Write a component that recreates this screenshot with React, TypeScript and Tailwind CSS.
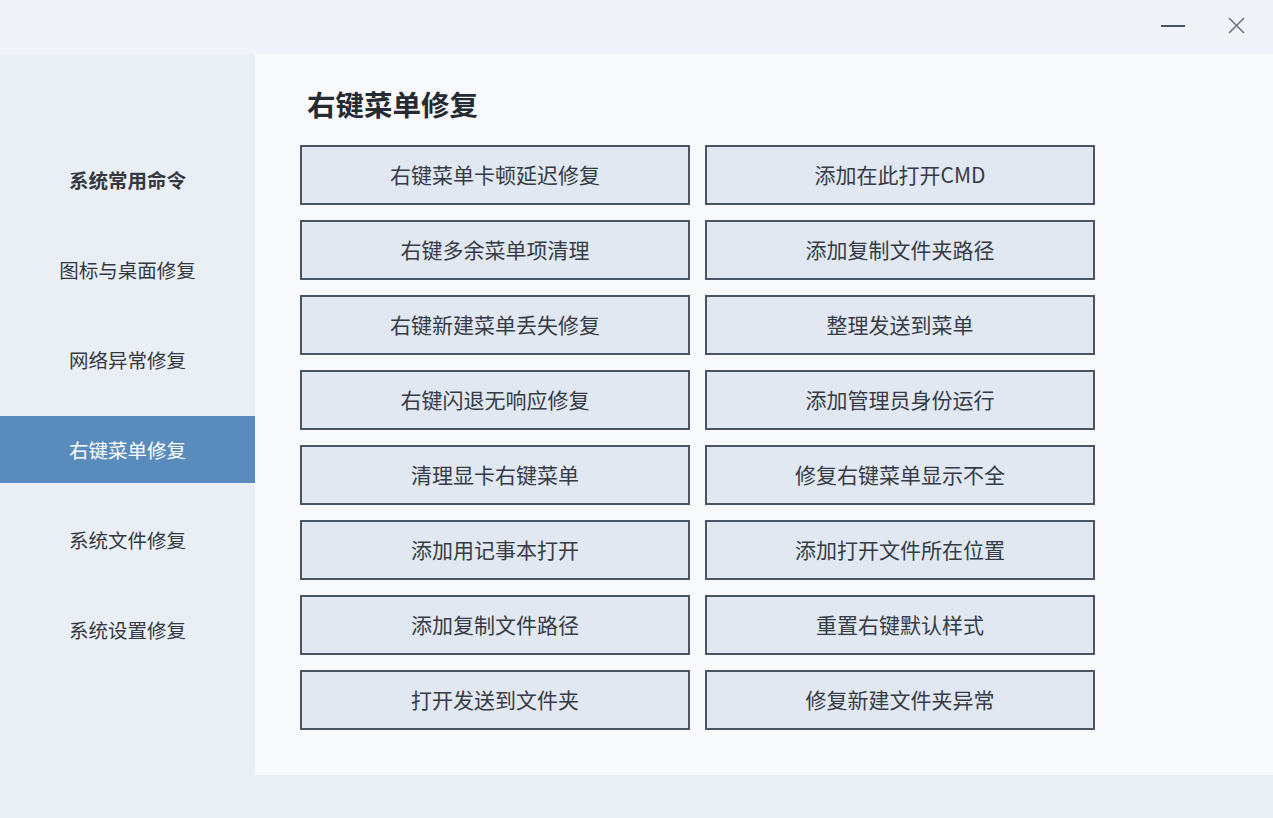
import React, { useState } from "react";

const navItems = [
  "系统常用命令",
  "图标与桌面修复",
  "网络异常修复",
  "右键菜单修复",
  "系统文件修复",
  "系统设置修复",
];

const actions = [
  "右键菜单卡顿延迟修复",
  "添加在此打开CMD",
  "右键多余菜单项清理",
  "添加复制文件夹路径",
  "右键新建菜单丢失修复",
  "整理发送到菜单",
  "右键闪退无响应修复",
  "添加管理员身份运行",
  "清理显卡右键菜单",
  "修复右键菜单显示不全",
  "添加用记事本打开",
  "添加打开文件所在位置",
  "添加复制文件路径",
  "重置右键默认样式",
  "打开发送到文件夹",
  "修复新建文件夹异常",
];

const font = "font-['Noto_Sans_CJK_SC','Noto_Sans',sans-serif]";

const App = () => {
  const [active, setActive] = useState(3);

  return (
    <div className={`w-[1273px] h-[818px] flex flex-col bg-[#eaeff6] text-[#333842] ${font}`}>
      {/* title bar */}
      <div className="h-[54px] bg-[#f0f4f9] flex justify-end items-start shrink-0">
        <button className="w-[60px] h-[52px] flex items-center justify-center">
          <span className="block w-[24px] h-[2px] bg-[#4a5262] mt-[-1px]" />
        </button>
        <button className="w-[70px] h-[52px] flex items-center justify-center pr-[3px]">
          <svg width="17" height="17" viewBox="0 0 17 17" className="mt-[-1px]">
            <path d="M1 1L16 16M16 1L1 16" stroke="#6b7385" strokeWidth="1.6" />
          </svg>
        </button>
      </div>

      <div className="flex flex-1">
        {/* sidebar */}
        <div className="w-[255px] shrink-0 pt-[92px] flex flex-col">
          {navItems.map((item, i) => (
            <button
              key={item}
              onClick={() => setActive(i)}
              className={`h-[67px] mb-[23px] flex items-center justify-center text-[19.5px] ${
                i === 0 ? "font-bold" : ""
              } ${i === active ? "bg-[#5a8bbd] text-white" : "text-[#333842]"}`}
            >
              {item}
            </button>
          ))}
        </div>

        {/* content */}
        <div className="flex flex-col flex-1">
          <div className="h-[721px] bg-[#f8f9fb] pl-[45px] pt-[30px]">
            <h1 className="text-[28.5px] font-bold text-[#252a33] leading-[40px] ml-[7px]">
              右键菜单修复
            </h1>
            <div className="mt-[21px] grid grid-cols-[390px_390px] gap-x-[15px] gap-y-[15px]">
              {actions.map((a) => (
                <button
                  key={a}
                  className="h-[60px] border-2 border-[#4b5463] bg-[#e1e8f1] text-[21px] text-[#363b45] flex items-center justify-center hover:bg-[#d5deea]"
                >
                  {a}
                </button>
              ))}
            </div>
          </div>
        </div>
      </div>
    </div>
  );
};

export default App;
